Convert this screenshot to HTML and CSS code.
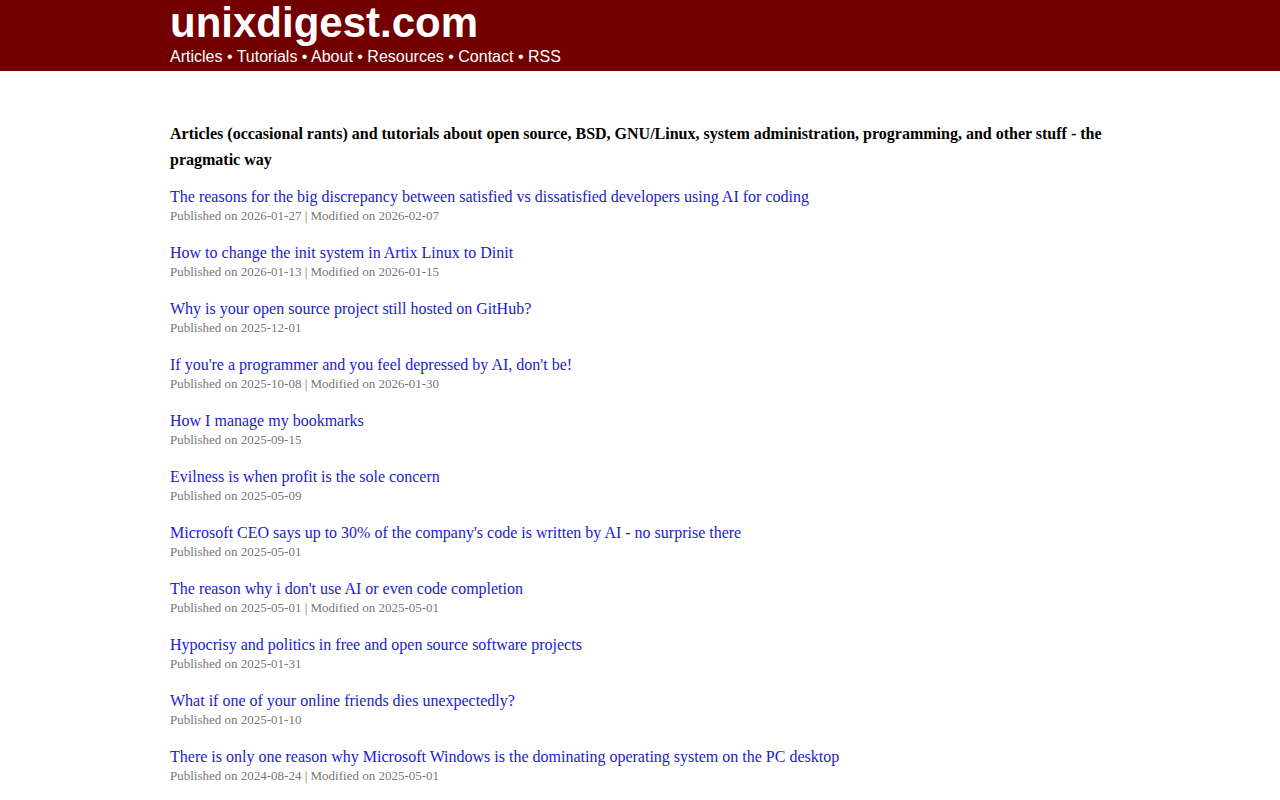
FILE: index.html
```html
<!DOCTYPE html>
<html lang="en">
<head>
<meta charset="utf-8">
<title>unixdigest.com</title>
<link rel="stylesheet" href="styles.css">
</head>
<body>
<header class="site-header">
  <div class="wrap">
    <div class="site-title">unixdigest.com</div>
    <nav class="site-nav">Articles • Tutorials • About • Resources • Contact • RSS</nav>
  </div>
</header>
<main class="wrap content">
  <p class="tagline">Articles (occasional rants) and tutorials about open source, BSD, GNU/Linux, system administration, programming, and other stuff - the pragmatic way</p>
  <ul class="posts">
    <li><a href="#">The reasons for the big discrepancy between satisfied vs dissatisfied developers using AI for coding</a><div class="meta">Published on 2026-01-27 | Modified on 2026-02-07</div></li>
    <li><a href="#">How to change the init system in Artix Linux to Dinit</a><div class="meta">Published on 2026-01-13 | Modified on 2026-01-15</div></li>
    <li><a href="#">Why is your open source project still hosted on GitHub?</a><div class="meta">Published on 2025-12-01</div></li>
    <li><a href="#">If you're a programmer and you feel depressed by AI, don't be!</a><div class="meta">Published on 2025-10-08 | Modified on 2026-01-30</div></li>
    <li><a href="#">How I manage my bookmarks</a><div class="meta">Published on 2025-09-15</div></li>
    <li><a href="#">Evilness is when profit is the sole concern</a><div class="meta">Published on 2025-05-09</div></li>
    <li><a href="#">Microsoft CEO says up to 30% of the company's code is written by AI - no surprise there</a><div class="meta">Published on 2025-05-01</div></li>
    <li><a href="#">The reason why i don't use AI or even code completion</a><div class="meta">Published on 2025-05-01 | Modified on 2025-05-01</div></li>
    <li><a href="#">Hypocrisy and politics in free and open source software projects</a><div class="meta">Published on 2025-01-31</div></li>
    <li><a href="#">What if one of your online friends dies unexpectedly?</a><div class="meta">Published on 2025-01-10</div></li>
    <li><a href="#">There is only one reason why Microsoft Windows is the dominating operating system on the PC desktop</a><div class="meta">Published on 2024-08-24 | Modified on 2025-05-01</div></li>
  </ul>
</main>
</body>
</html>
```
FILE: styles.css
```css
html, body {
  margin: 0;
  padding: 0;
  background: #ffffff;
}
body {
  font-family: "Liberation Serif", "Times New Roman", serif;
  font-size: 16px;
  color: #000;
}
.wrap {
  width: 940px;
  margin: 0 auto;
}
.site-header {
  background: #730000;
  color: #fff;
  height: 71px;
  overflow: hidden;
}
.site-header .wrap {
  font-family: "Liberation Sans", Arial, sans-serif;
}
.site-title {
  font-size: 42px;
  font-weight: bold;
  line-height: 44px;
  padding-top: 1px;
}
.site-nav {
  font-size: 16px;
  line-height: 20px;
  margin-top: 2px;
}
.content {
  padding-top: 50px;
}
.tagline {
  margin: 0 0 14px 0;
  font-weight: bold;
  line-height: 26px;
}
.posts {
  list-style: none;
  margin: 0;
  padding: 0;
}
.posts li {
  margin-bottom: 18px;
}
.posts a {
  display: block;
  color: #1a1ad6;
  text-decoration: none;
  line-height: 20px;
}
.meta {
  font-size: 13px;
  line-height: 18px;
  color: #777777;
}
```
